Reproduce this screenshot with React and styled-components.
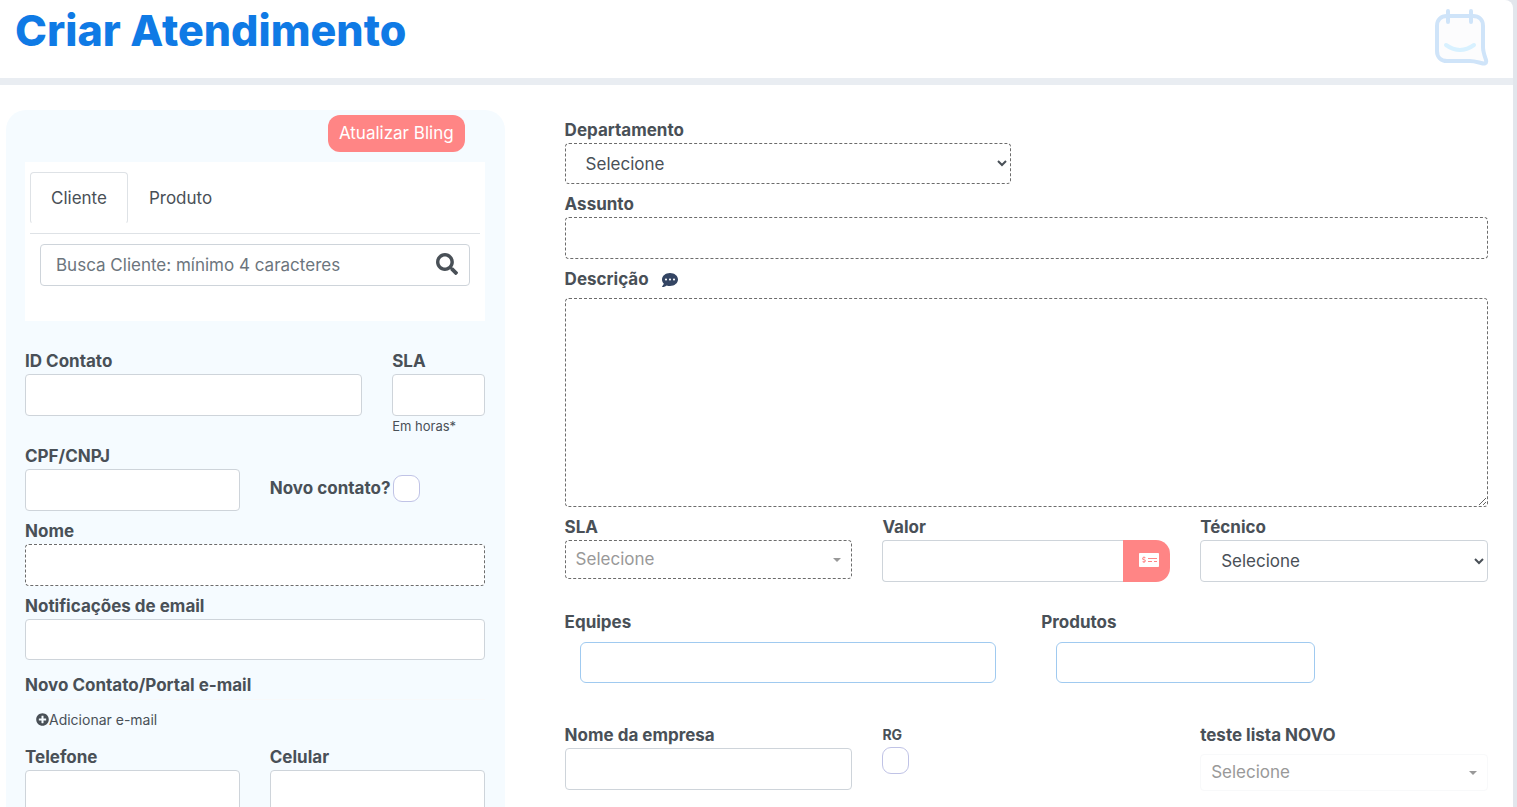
import React, { useState } from 'react'
import styled, { createGlobalStyle, css } from 'styled-components'
import { FaSearch, FaPlusCircle, FaCommentDots, FaMoneyCheckAlt } from 'react-icons/fa'

const GlobalStyle = createGlobalStyle`
    *, *::before, *::after{
        box-sizing:border-box;
    }
    :root{
        --color-text:#495057;
        --color-primary:#0f7ae5;
        --color-accent:#ff8585;
        --color-border:#ced4da;
        --color-panel:#f5fbff;
    }
    html{
        scrollbar-width:none;
    }
    body{
        margin:0;
        background-color:#e2e6ec;
        color:var(--color-text);
        font-family:Inter, "Open Sans", sans-serif;
        font-size:17px;
        line-height:25px;
    }
    button, input, select, textarea{
        font:inherit;
        color:inherit;
    }
`;

function Logo() {
    return (
        <LogoIcon viewBox="0 0 56 58" fill="none" strokeLinecap="round" strokeLinejoin="round" aria-hidden="true">
            <path
                d="M14 7H40C46 7 50 11 50 17V38C50 43 52 48 53 51C54 55 51 55 48 54C44 53 41 52 37 52H14C8 52 4 48 4 42V17C4 11 8 7 14 7Z"
                fill="#fcfcfd"
                stroke="#cfe4f9"
                strokeWidth="4"
            />
            <path d="M15 2V13M38 2V13" stroke="#cfe4f9" strokeWidth="4" />
            <path d="M13 36Q27 46 41 36" stroke="#d8f1ff" strokeWidth="4" />
        </LogoIcon>
    )
}

function Field({ id, label, required, height }) {
    return (
        <Group>
            <Label htmlFor={id}>{label}</Label>
            <Input id={id} type="text" $required={required} $height={height} />
        </Group>
    )
}

function PickerField({ id, required, height }) {
    return (
        <Picker $height={height}>
            <PickerSelect id={id} $required={required}>
                <option>Selecione</option>
            </PickerSelect>
        </Picker>
    )
}

function ContactPanel() {
    const [tab, setTab] = useState('Cliente')

    return (
        <Panel>
            <PanelTop>
                <SyncButton type="button">Atualizar Bling</SyncButton>
            </PanelTop>

            <SearchCard>
                <Tabs role="tablist">
                    {['Cliente', 'Produto'].map((name) => (
                        <Tab
                            key={name}
                            type="button"
                            role="tab"
                            aria-selected={tab === name}
                            $active={tab === name}
                            onClick={() => setTab(name)}
                        >
                            {name}
                        </Tab>
                    ))}
                </Tabs>
                <SearchBox>
                    <SearchInput
                        type="text"
                        aria-label={`Busca ${tab}`}
                        placeholder={`Busca ${tab}: mínimo 4 caracteres`}
                    />
                    <SearchButton type="button" aria-label="Buscar">
                        <FaSearch size={22} />
                    </SearchButton>
                </SearchBox>
            </SearchCard>

            <Row>
                <Col $span={9}>
                    <Field id="contact-id" label="ID Contato" />
                </Col>
                <Col $span={3}>
                    <Field id="contact-sla" label="SLA" />
                    <Hint>Em horas*</Hint>
                </Col>
            </Row>
            <Row>
                <Col $span={6}>
                    <Field id="cpf" label="CPF/CNPJ" />
                </Col>
                <Col $span={6}>
                    <CheckLine>
                        <Label htmlFor="new-contact">Novo contato?</Label>
                        <Checkbox id="new-contact" type="checkbox" />
                    </CheckLine>
                </Col>
            </Row>
            <Field id="name" label="Nome" required />
            <Field id="notifications" label="Notificações de email" height={41} />

            <PortalTitle>Novo Contato/Portal e-mail</PortalTitle>
            <AddButton type="button">
                <FaPlusCircle size={13} />
                Adicionar e-mail
            </AddButton>

            <Row>
                <Col $span={6}>
                    <Field id="phone" label="Telefone" />
                </Col>
                <Col $span={6}>
                    <Field id="mobile" label="Celular" />
                </Col>
            </Row>
        </Panel>
    )
}

function TicketForm() {
    return (
        <Form>
            <Row>
                <Col $span={6}>
                    <Group>
                        <Label htmlFor="department">Departamento</Label>
                        <Select id="department" $required $height={41}>
                            <option>Selecione</option>
                        </Select>
                    </Group>
                </Col>
            </Row>
            <Field id="subject" label="Assunto" required />
            <Group>
                <LabelLine>
                    <Label htmlFor="description">Descrição</Label>
                    <FaCommentDots size={16} color="#344563" />
                </LabelLine>
                <TextArea id="description" />
            </Group>

            <Row>
                <Col $span={4}>
                    <Label htmlFor="ticket-sla">SLA</Label>
                    <PickerField id="ticket-sla" required height={39} />
                </Col>
                <Col $span={4}>
                    <Label htmlFor="value">Valor</Label>
                    <InputGroup>
                        <Input id="value" type="text" />
                        <ValueButton type="button" aria-label="Valores">
                            <FaMoneyCheckAlt size={20} />
                        </ValueButton>
                    </InputGroup>
                </Col>
                <Col $span={4}>
                    <Label htmlFor="technician">Técnico</Label>
                    <Select id="technician">
                        <option>Selecione</option>
                    </Select>
                </Col>
            </Row>

            <TagsRow>
                <Col $span={6}>
                    <Label htmlFor="teams">Equipes</Label>
                    <TagBox>
                        <TagInput id="teams" type="text" />
                    </TagBox>
                </Col>
                <Col $span={6}>
                    <Label htmlFor="products">Produtos</Label>
                    <TagBox>
                        <TagInput id="products" type="text" $width="62%" />
                    </TagBox>
                </Col>
            </TagsRow>

            <ExtraRow>
                <Col $span={4}>
                    <Field id="company" label="Nome da empresa" />
                </Col>
                <Col $span={4}>
                    <SmallLabel htmlFor="rg">RG</SmallLabel>
                    <Checkbox id="rg" type="checkbox" />
                </Col>
                <Col $span={4}>
                    <ListLabel htmlFor="list">teste lista NOVO</ListLabel>
                    <PickerField id="list" height={37} />
                </Col>
            </ExtraRow>
        </Form>
    )
}

function App() {
    return (
        <>
            <GlobalStyle />
            <Page>
                <Header>
                    <Title>Criar Atendimento</Title>
                    <Logo />
                </Header>
                <Content>
                    <ContactPanel />
                    <TicketForm />
                </Content>
            </Page>
        </>
    )
}

const Page = styled.div`
    min-height:100vh;
    margin-right:4px;
    background-color:#fff;
    border-top-right-radius:8px;
`;

const Header = styled.header`
    display:flex;
    justify-content:space-between;
    align-items:flex-start;
    height:85px;
    padding:9px 24px 0 15px;
    border-bottom:7px solid #e9edf2;
`;

const Title = styled.h1`
    margin:0;
    color:var(--color-primary);
    font-size:43px;
    line-height:42px;
    font-weight:800;
`;

const LogoIcon = styled.svg`
    width:56px;
    height:58px;
`;

const Content = styled.main`
    display:grid;
    grid-template-columns:27fr 50fr;
    gap:60px;
    padding:25px 25px 0 6px;
`;

const Panel = styled.section`
    padding:5px 20px 24px 19px;
    border-radius:20px 20px 0 0;
    background-color:var(--color-panel);
`;

const PanelTop = styled.div`
    display:flex;
    justify-content:flex-end;
    padding-right:20px;
    margin-bottom:10px;
`;

const SyncButton = styled.button`
    height:37px;
    padding:0 11px;
    border:0;
    border-radius:12px;
    background-color:var(--color-accent);
    color:#fff;
    cursor:pointer;
`;

const SearchCard = styled.div`
    padding:10px 5px 35px;
    margin-bottom:28px;
    background-color:#fff;
`;

const Tabs = styled.div`
    display:flex;
    padding-bottom:9px;
    margin-bottom:10px;
    border-bottom:1px solid #dee2e6;
`;

const Tab = styled.button`
    height:52px;
    padding:0 20px;
    border:1px solid transparent;
    border-radius:4px;
    background-color:#fff;
    cursor:pointer;
    ${({ $active }) => $active && css`
        border-color:#dee2e6 #dee2e6 #fff;
    `}
`;

const SearchBox = styled.div`
    display:flex;
    height:42px;
    margin:0 10px;
    border:1px solid var(--color-border);
    border-radius:4px;
`;

const SearchInput = styled.input`
    flex:1;
    min-width:0;
    padding:0 15px;
    border:0;
    background:none;
    &::placeholder{
        color:#6c757d;
        opacity:1;
    }
`;

const SearchButton = styled.button`
    display:flex;
    align-items:center;
    padding:0 11px 2px;
    border:0;
    background:none;
    cursor:pointer;
`;

const Form = styled.form`
    padding-top:8px;
`;

const Row = styled.div`
    display:flex;
    margin:0 -15px;
`;

const Col = styled.div`
    flex:0 0 ${({ $span }) => ($span / 12) * 100}%;
    min-width:0;
    padding:0 15px;
`;

const TagsRow = styled(Row)`
    padding-top:28px;
`;

const ExtraRow = styled(Row)`
    padding-top:40px;
`;

const Group = styled.div`
    margin-bottom:8px;
`;

const Label = styled.label`
    display:block;
    font-weight:700;
`;

const SmallLabel = styled(Label)`
    font-size:14px;
    line-height:24px;
`;

const ListLabel = styled(Label)`
    margin-bottom:6px;
`;

const LabelLine = styled.div`
    display:flex;
    align-items:center;
    gap:13px;
    margin-bottom:6px;
`;

const control = css`
    display:block;
    width:100%;
    height:${({ $height }) => $height || 42}px;
    border:${({ $required }) => ($required ? '1px dashed #6c6c6c' : '1px solid var(--color-border)')};
    border-radius:4px;
    background-color:#fff;
`;

const Input = styled.input`
    ${control}
    padding:0 12px;
`;

const Select = styled.select`
    ${control}
    padding:0 0 0 16px;
`;

const TextArea = styled.textarea`
    display:block;
    width:100%;
    height:209px;
    padding:8px 12px;
    border:1px dashed #6c6c6c;
    border-radius:4px;
    resize:vertical;
`;

const Picker = styled.div`
    position:relative;
    height:${({ $height }) => $height}px;
    &::after{
        content:"";
        position:absolute;
        top:50%;
        right:11px;
        margin-top:-2px;
        border:4px solid transparent;
        border-top-color:#999;
        border-bottom:0;
        pointer-events:none;
    }
`;

const PickerSelect = styled.select`
    width:100%;
    height:100%;
    padding:0 10px;
    border:${({ $required }) => ($required ? '1px dashed #6c6c6c' : '1px solid #f8f9fa')};
    border-radius:4px;
    background-color:#fff;
    color:#999;
    appearance:none;
`;

const InputGroup = styled.div`
    display:flex;
    ${Input}{
        flex:1;
        min-width:0;
        border-right:0;
        border-radius:4px 0 0 4px;
    }
`;

const ValueButton = styled.button`
    display:flex;
    align-items:center;
    height:42px;
    padding:0 11px 2px 16px;
    border:0;
    border-radius:0 14px 14px 0;
    background-color:var(--color-accent);
    color:#fff;
    cursor:pointer;
`;

const TagBox = styled.div`
    padding:7px 15px 0;
`;

const TagInput = styled.input`
    display:block;
    width:${({ $width }) => $width || '100%'};
    height:41px;
    padding:0 12px;
    border:1px solid #a0caf0;
    border-radius:6px;
    background-color:#fff;
`;

const Hint = styled.small`
    display:block;
    margin-top:-8px;
    margin-bottom:8px;
    font-size:13px;
    line-height:20px;
    white-space:nowrap;
`;

const CheckLine = styled.div`
    display:flex;
    align-items:center;
    gap:3px;
    padding-top:31px;
`;

const Checkbox = styled.input`
    display:block;
    flex:none;
    width:27px;
    height:27px;
    margin:0;
    border:1px solid #c0c3e6;
    border-radius:9px;
    background-color:#fff;
    appearance:none;
    cursor:pointer;
    &:checked{
        background-color:var(--color-primary);
    }
`;

const PortalTitle = styled.h2`
    margin:13px 0 0;
    padding-bottom:1px;
    border-bottom:1px solid #f8f9fa;
    font-size:17px;
    line-height:25px;
    font-weight:700;
`;

const AddButton = styled.button`
    display:flex;
    align-items:center;
    height:38px;
    padding:0 11px;
    margin-bottom:7px;
    border:0;
    background:none;
    font-size:14px;
    cursor:pointer;
`;

export default App
